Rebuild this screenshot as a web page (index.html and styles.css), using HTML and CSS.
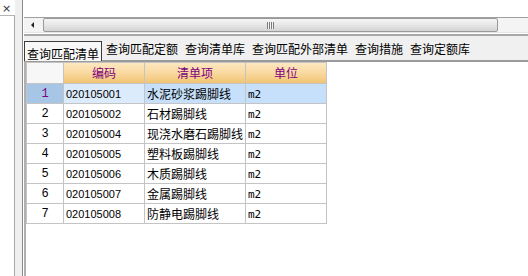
FILE: index.html
```html
<!DOCTYPE html>
<html lang="zh-CN">
<head>
  <meta charset="UTF-8">
  <title>查询匹配清单</title>
  <link rel="stylesheet" href="styles.css">
</head>
<body>

  <div class="side">
    <div class="side-head"><span class="close">×</span></div>
    <div class="side-body"></div>
  </div>
  <div class="splitter"></div>

  <div class="main">
    <div class="top-space"></div>

    <div class="hscroll">
      <div class="arrow-box"><span class="arrow-left"></span></div>
      <div class="thumb"><span class="grip"></span></div>
      <div class="track"></div>
    </div>

    <div class="tabs">
      <div class="tab active">查询匹配清单</div>
      <div class="tab">查询匹配定额</div>
      <div class="tab">查询清单库</div>
      <div class="tab">查询匹配外部清单</div>
      <div class="tab">查询措施</div>
      <div class="tab">查询定额库</div>
    </div>

    <div class="grid-area">
      <table id="matchTable">
        <colgroup>
          <col class="c-num">
          <col class="c-code">
          <col class="c-name">
          <col class="c-unit">
        </colgroup>
        <thead>
          <tr>
            <th class="corner"></th>
            <th>编码</th>
            <th>清单项</th>
            <th>单位</th>
          </tr>
        </thead>
        <tbody>
          <tr class="selected">
            <td class="num">1</td>
            <td class="code current">020105001</td>
            <td>水泥砂浆踢脚线</td>
            <td class="unit">m2</td>
          </tr>
          <tr>
            <td class="num">2</td>
            <td class="code">020105002</td>
            <td>石材踢脚线</td>
            <td class="unit">m2</td>
          </tr>
          <tr>
            <td class="num">3</td>
            <td class="code">020105004</td>
            <td>现浇水磨石踢脚线</td>
            <td class="unit">m2</td>
          </tr>
          <tr>
            <td class="num">4</td>
            <td class="code">020105005</td>
            <td>塑料板踢脚线</td>
            <td class="unit">m2</td>
          </tr>
          <tr>
            <td class="num">5</td>
            <td class="code">020105006</td>
            <td>木质踢脚线</td>
            <td class="unit">m2</td>
          </tr>
          <tr>
            <td class="num">6</td>
            <td class="code">020105007</td>
            <td>金属踢脚线</td>
            <td class="unit">m2</td>
          </tr>
          <tr>
            <td class="num">7</td>
            <td class="code">020105008</td>
            <td>防静电踢脚线</td>
            <td class="unit">m2</td>
          </tr>
        </tbody>
      </table>
    </div>
  </div>

</body>
</html>
```

FILE: styles.css
```css
html, body {
  margin: 0;
  padding: 0;
}

body {
  width: 528px;
  height: 276px;
  overflow: hidden;
  display: flex;
  background: #fff;
  font-family: "Noto Sans CJK SC", "Liberation Sans", sans-serif;
  font-size: 12px;
  color: #000;
}

/* left docked pane */
.side {
  width: 15px;
  display: flex;
  flex-direction: column;
}

.side-head {
  height: 15px;
  border-bottom: 1px solid #b4b4b4;
  position: relative;
}

.close {
  position: absolute;
  left: 2px;
  top: 3px;
  font-family: "DejaVu Sans", sans-serif;
  font-size: 11px;
  line-height: 11px;
  color: #333;
}

.side-body {
  flex: 1;
  border-right: 1px solid #a8a8a8;
  background: #fff;
}

.splitter {
  width: 7px;
  background: #efefef;
}

/* main area */
.main {
  flex: 1;
  display: flex;
  flex-direction: column;
  border-left: 1px solid #8c8c8c;
  padding-left: 1px;
  background: #fff;
}

.top-space {
  height: 17px;
}

.hscroll {
  height: 14px;
  display: flex;
  border-top: 1px solid #a0a0a0;
  border-bottom: 1px solid #e6e6e6;
  background: #f3f3f3;
}

.arrow-box {
  width: 19px;
  display: flex;
  align-items: center;
  padding-left: 7px;
  box-sizing: border-box;
}

.arrow-left {
  width: 0;
  height: 0;
  border-top: 3px solid transparent;
  border-bottom: 3px solid transparent;
  border-right: 3px solid #222;
}

.thumb {
  width: 455px;
  box-sizing: border-box;
  border: 1px solid #9a9a9a;
  border-radius: 2px;
  background: linear-gradient(#f6f6f6, #e6e6e6 50%, #d4d4d4);
  display: flex;
  align-items: center;
  justify-content: center;
}

.grip {
  width: 7px;
  height: 7px;
  background: repeating-linear-gradient(90deg, #7c7c7c 0 1px, #f2f2f2 1px 2px);
}

.track {
  flex: 1;
  background: #f4f4f4;
}

/* tab strip */
.tabs {
  height: 24px;
  margin-top: 1px;
  display: flex;
  align-items: flex-end;
  background: #f0f0f0;
  border-top: 2px solid #a8a8a8;
  border-bottom: 2px solid #9a9a9a;
}

.tab {
  padding: 0 3px 4px;
  margin-right: 1px;
  line-height: 14px;
  white-space: nowrap;
}

.tab.active {
  padding: 5px 2px 0;
  border: 1px solid #3c3c3c;
  border-bottom: none;
  background: #f8f8f8;
  margin-bottom: -1px;
}

/* grid */
.grid-area {
  flex: 1;
  border-left: 2px solid #b0b0b0;
  background: #fff;
}

table {
  table-layout: fixed;
  width: 301px;
  border-collapse: separate;
  border-spacing: 1px;
  background: #c4c4c4;
}

.c-num { width: 36px; }
.c-code { width: 80px; }
.c-name { width: 100px; }
.c-unit { width: 80px; }

th {
  height: 20px;
  padding: 0;
  font-weight: normal;
  color: #800080;
  text-align: center;
  background: linear-gradient(#fde8c0, #f9d9a0 50%, #f2c472);
  line-height: 20px;
}

th.corner {
  background: #f7f7f7;
}

td {
  height: 18px;
  padding: 0 2px;
  background: #fff;
  line-height: 18px;
  white-space: nowrap;
  overflow: hidden;
}

td.num {
  text-align: center;
  font-family: "Liberation Mono", monospace;
  font-size: 12px;
}

td.code {
  font-family: "Liberation Sans", sans-serif;
  font-size: 11px;
}

td.unit {
  font-family: "DejaVu Sans Mono", monospace;
  font-size: 11px;
  padding-top: 1px;
  line-height: 17px;
}

tr.selected td {
  background: #c6e0fb;
}

tr.selected td.current {
  background: #dcebfb;
}

tr.selected td.num {
  background: #a7c5e5;
  color: #800080;
}
```
